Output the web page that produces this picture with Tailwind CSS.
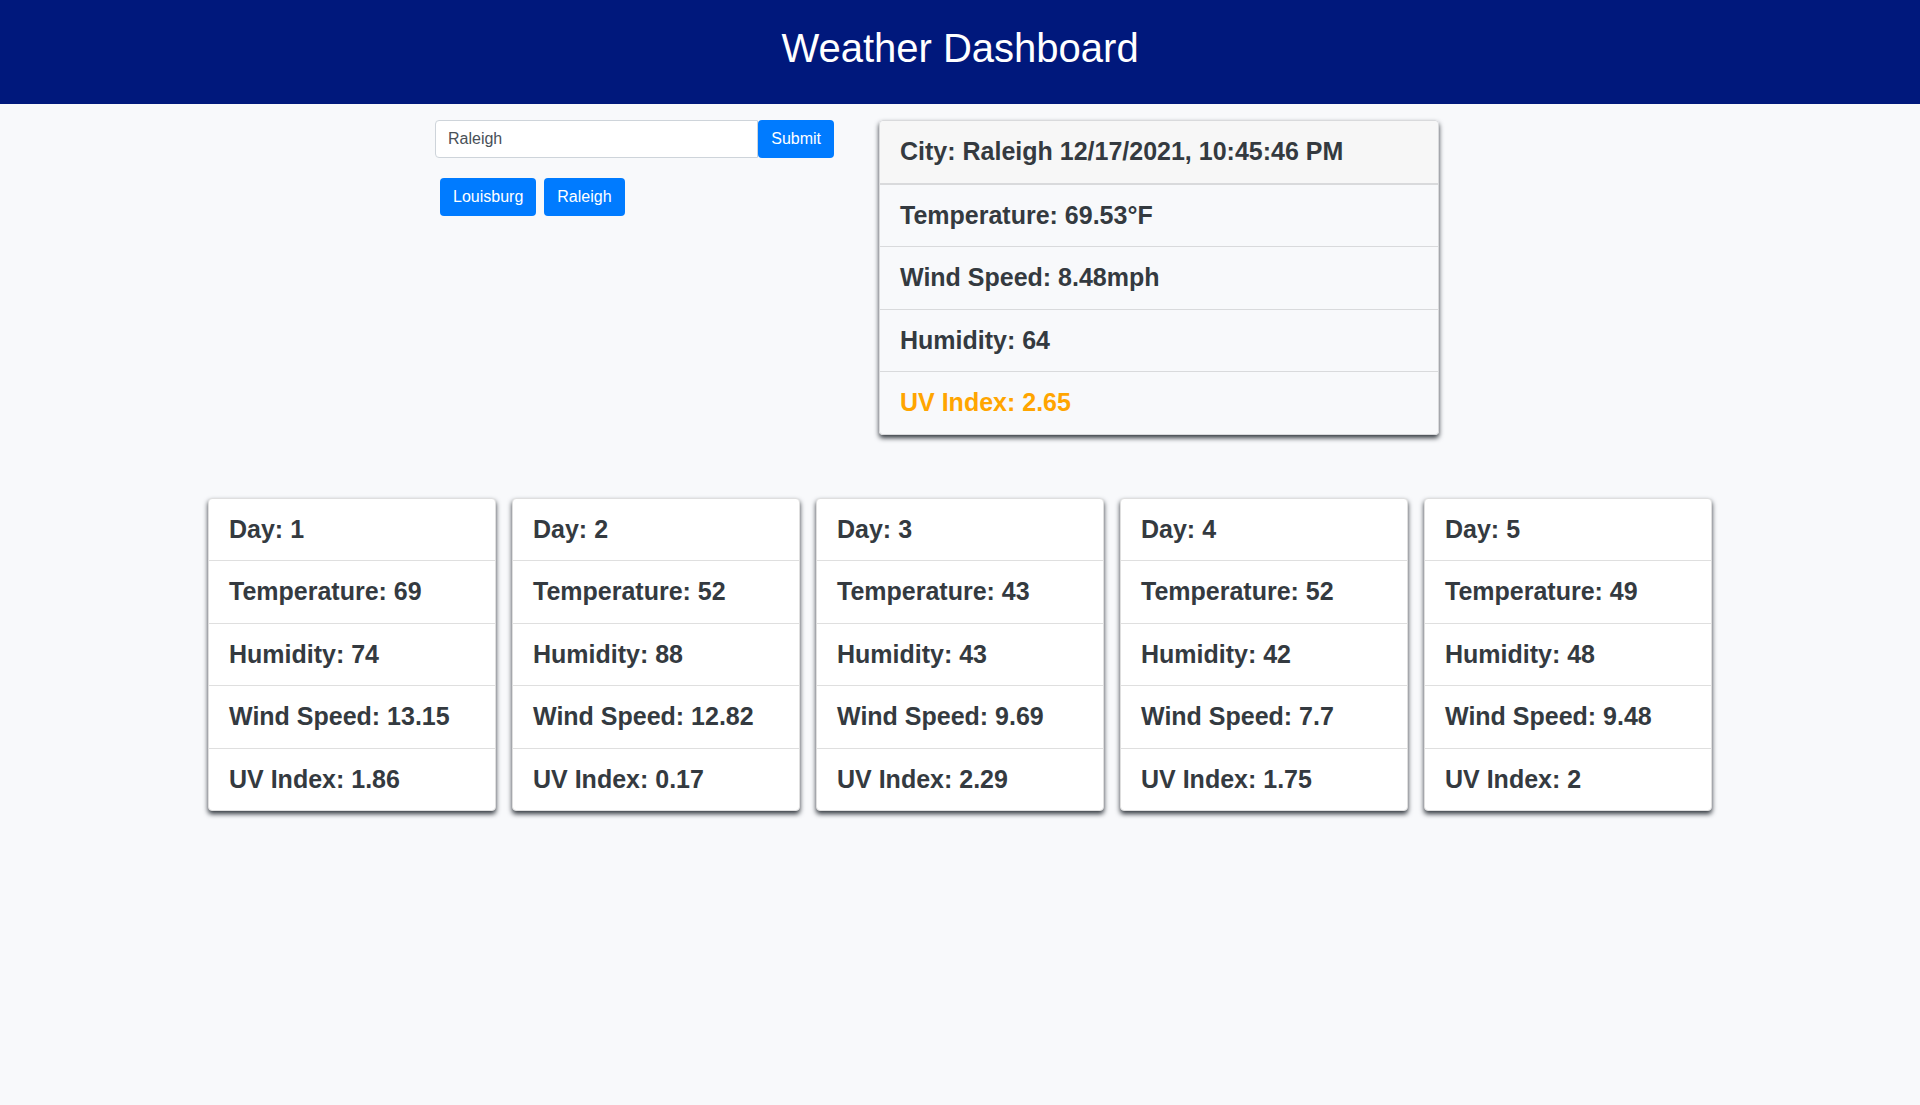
<!DOCTYPE html>
<html lang="en">
<head>
<meta charset="utf-8">
<meta name="viewport" content="width=device-width, initial-scale=1">
<title>Weather Dashboard</title>
<script src="https://cdn.jsdelivr.net/npm/@tailwindcss/browser@4"></script>
</head>
<body class="min-h-screen bg-[#f8f9fb] font-['Liberation_Sans',Arial,sans-serif] text-base text-[#343a40]">
<header class="bg-[#00187c] pt-6 pb-8 text-center text-white">
  <h1 class="text-[40px] leading-12">Weather Dashboard</h1>
</header>
<main>
  <section class="mx-auto flex max-w-[1050px] items-start gap-[45px] pt-4">
    <div class="w-[399px]">
      <form class="flex">
        <input type="text" aria-label="City" value="Raleigh" class="h-[38px] min-w-0 grow rounded-l border border-[#ced4da] bg-white px-3 text-[#495057] outline-none">
        <button type="button" class="h-[38px] rounded bg-[#007bff] px-[13px] text-white">Submit</button>
      </form>
      <div class="mt-5 flex gap-2 pl-[5px]">
        <button type="button" class="h-[38px] rounded bg-[#007bff] px-[13px] text-white">Louisburg</button>
        <button type="button" class="h-[38px] rounded bg-[#007bff] px-[13px] text-white">Raleigh</button>
      </div>
    </div>
    <article class="w-[560px] rounded border border-[#d9dadc] text-[25px] leading-normal font-bold shadow-[0_3px_5px_#343a40]">
      <h2 class="rounded-t border-b border-[#d9dadc] bg-[#f7f7f7] px-5 py-3">City: Raleigh 12/17/2021, 10:45:46 PM</h2>
      <ul class="divide-y divide-[#d9dadc] rounded-b border-t border-[#d9dadc] bg-[#f8f9fb]">
        <li class="px-5 py-3">Temperature: 69.53°F</li>
        <li class="px-5 py-3">Wind Speed: 8.48mph</li>
        <li class="px-5 py-3">Humidity: 64</li>
        <li class="px-5 py-3 text-[#ffa500]">UV Index: 2.65</li>
      </ul>
    </article>
  </section>
  <section class="mx-auto mt-[63px] grid max-w-[1504px] grid-cols-5 gap-4 text-[25px] leading-normal font-bold">
    <ul class="divide-y divide-[#dfdfdf] rounded border border-[#dfdfdf] bg-white shadow-[0_3px_5px_#343a40]">
      <li class="px-5 py-3">Day: 1</li>
      <li class="px-5 py-3">Temperature: 69</li>
      <li class="px-5 py-3">Humidity: 74</li>
      <li class="px-5 py-3">Wind Speed: 13.15</li>
      <li class="px-5 py-3">UV Index: 1.86</li>
    </ul>
    <ul class="divide-y divide-[#dfdfdf] rounded border border-[#dfdfdf] bg-white shadow-[0_3px_5px_#343a40]">
      <li class="px-5 py-3">Day: 2</li>
      <li class="px-5 py-3">Temperature: 52</li>
      <li class="px-5 py-3">Humidity: 88</li>
      <li class="px-5 py-3">Wind Speed: 12.82</li>
      <li class="px-5 py-3">UV Index: 0.17</li>
    </ul>
    <ul class="divide-y divide-[#dfdfdf] rounded border border-[#dfdfdf] bg-white shadow-[0_3px_5px_#343a40]">
      <li class="px-5 py-3">Day: 3</li>
      <li class="px-5 py-3">Temperature: 43</li>
      <li class="px-5 py-3">Humidity: 43</li>
      <li class="px-5 py-3">Wind Speed: 9.69</li>
      <li class="px-5 py-3">UV Index: 2.29</li>
    </ul>
    <ul class="divide-y divide-[#dfdfdf] rounded border border-[#dfdfdf] bg-white shadow-[0_3px_5px_#343a40]">
      <li class="px-5 py-3">Day: 4</li>
      <li class="px-5 py-3">Temperature: 52</li>
      <li class="px-5 py-3">Humidity: 42</li>
      <li class="px-5 py-3">Wind Speed: 7.7</li>
      <li class="px-5 py-3">UV Index: 1.75</li>
    </ul>
    <ul class="divide-y divide-[#dfdfdf] rounded border border-[#dfdfdf] bg-white shadow-[0_3px_5px_#343a40]">
      <li class="px-5 py-3">Day: 5</li>
      <li class="px-5 py-3">Temperature: 49</li>
      <li class="px-5 py-3">Humidity: 48</li>
      <li class="px-5 py-3">Wind Speed: 9.48</li>
      <li class="px-5 py-3">UV Index: 2</li>
    </ul>
  </section>
</main>
</body>
</html>
